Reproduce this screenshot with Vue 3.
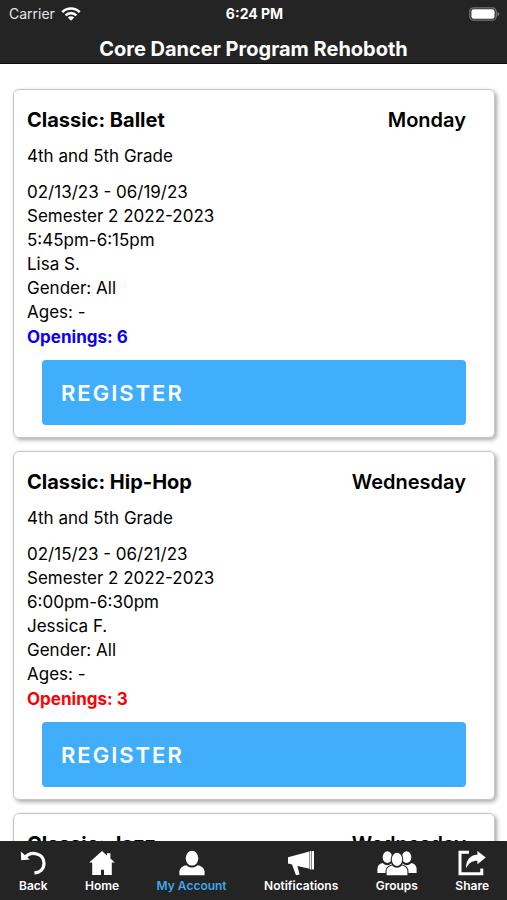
<script setup>
const classes = [
  { name: 'Classic: Ballet', day: 'Monday', grade: '4th and 5th Grade', dates: '02/13/23 - 06/19/23', term: 'Semester 2 2022-2023', time: '5:45pm-6:15pm', teacher: 'Lisa S.', gender: 'All', ages: '-', openings: 6 },
  { name: 'Classic: Hip-Hop', day: 'Wednesday', grade: '4th and 5th Grade', dates: '02/15/23 - 06/21/23', term: 'Semester 2 2022-2023', time: '6:00pm-6:30pm', teacher: 'Jessica F.', gender: 'All', ages: '-', openings: 3 },
  { name: 'Classic: Jazz', day: 'Wednesday' },
]
</script>

<template>
  <div class="screen">
    <header class="top">
      <div class="status">
        <span class="carrier">
          Carrier
          <svg width="20" height="14" viewBox="0 0 20 14" fill="none" stroke="#fff" stroke-width="2.6">
            <path d="M1.3 5.2C6.2 0.3 13.8 0.3 18.7 5.2" />
            <path d="M4.6 8.4C7.7 5.4 12.3 5.4 15.4 8.4" />
            <path d="M10 13.8L6.8 10.6C8.6 8.9 11.4 8.9 13.2 10.6Z" fill="#fff" stroke="none" />
          </svg>
        </span>
        <span class="clock">6:24 PM</span>
        <span class="power">
          <svg width="31" height="14" viewBox="0 0 31 14">
            <rect x="0.8" y="0.8" width="26.4" height="12.4" rx="3.8" fill="none" stroke="#777" stroke-width="1.2" />
            <rect x="2.4" y="2.2" width="23.2" height="9.6" rx="2.2" fill="#fff" />
            <path d="M28.4 4.8Q30.4 5.5 30.4 7T28.4 9.2Z" fill="#777" />
          </svg>
        </span>
      </div>
      <h1>Core Dancer Program Rehoboth</h1>
    </header>

    <main class="list">
      <article v-for="c in classes" :key="c.name" class="card">
        <div class="heading">
          <h2>{{ c.name }}</h2>
          <span>{{ c.day }}</span>
        </div>
        <template v-if="c.grade">
          <p class="grade">{{ c.grade }}</p>
          <p>{{ c.dates }}</p>
          <p>{{ c.term }}</p>
          <p>{{ c.time }}</p>
          <p>{{ c.teacher }}</p>
          <p>Gender: {{ c.gender }}</p>
          <p>Ages: {{ c.ages }}</p>
          <p class="openings" :class="{ few: c.openings < 5 }">Openings: {{ c.openings }}</p>
          <button type="button" class="register">REGISTER</button>
        </template>
      </article>
    </main>

    <nav class="tabs">
      <a href="#back">
        <svg width="26" height="26" viewBox="0 0 26 26">
          <path d="M5.2 7.4C11 0.5 24 3.2 24 13.2C24 19.3 19.5 22.9 14.4 22.9" fill="none" stroke="#fff" stroke-width="3.2" />
          <path d="M0.8 1.6L1.2 10.2L9.8 9.6Z" fill="#fff" />
        </svg>
        Back
      </a>
      <a href="#home">
        <svg width="26" height="26" viewBox="0 0 26 26" fill="#fff">
          <path d="M13 1L18 5.5V3.2H21.4V8.6L25.8 12.6H22.8V25H15V19.8H12V25H3.2V12.6H0.2Z" />
        </svg>
        Home
      </a>
      <a href="#account" class="active" aria-current="page">
        <svg width="26" height="26" viewBox="0 0 26 26" fill="#fff">
          <ellipse cx="13" cy="8.2" rx="6.3" ry="7.4" />
          <path d="M0.4 25.2V22C0.4 18.2 3.5 16 7.4 15.2C10.6 18.4 15.4 18.4 18.6 15.2C22.5 16 25.6 18.2 25.6 22V25.2Z" />
        </svg>
        My Account
      </a>
      <a href="#notifications">
        <svg width="28" height="26" viewBox="0 0 28 26" fill="#fff">
          <path d="M1 7.2L22.4 1.6V18.8L10.4 16L12.6 24.4L9 25.2L5 14.6L1 13.6Z" />
          <path d="M22.8 1H27V19.4H22.8Z" />
          <path d="M24.4 1V19.4" stroke="#555" stroke-width="0.8" />
        </svg>
        Notifications
      </a>
      <a href="#groups">
        <svg width="40" height="26" viewBox="0 0 40 26" fill="#fff">
          <ellipse cx="10.4" cy="7.2" rx="4.7" ry="5.9" />
          <ellipse cx="29.6" cy="7.2" rx="4.7" ry="5.9" />
          <path d="M0.4 23V18.8C0.4 15.7 2.4 13.8 5.6 13C9 16.2 12 15.5 14.5 13.2L17 23Z" />
          <path d="M39.6 23V18.8C39.6 15.7 37.6 13.8 34.4 13C31 16.2 28 15.5 25.5 13.2L23 23Z" />
          <g stroke="#242424" stroke-width="2.2" paint-order="stroke">
            <path d="M9.6 25.2V21.4C9.6 18 12 16.4 15.2 15.6C18 18.5 22 18.5 24.8 15.6C28 16.4 30.4 18 30.4 21.4V25.2Z" />
            <ellipse cx="20" cy="9.4" rx="5.2" ry="6.6" />
          </g>
        </svg>
        Groups
      </a>
      <a href="#share">
        <svg width="28" height="26" viewBox="0 0 28 26">
          <path d="M11 2.2H2V23.8H23.8V18.4" fill="none" stroke="#fff" stroke-width="3" />
          <path d="M19.4 1L27.8 7.6L19.4 14.2V10.8C14.4 10.6 11 13 8 18.2C8 10.2 12 5 19.4 4.8Z" fill="#fff" />
        </svg>
        Share
      </a>
    </nav>
  </div>
</template>

<style>
body {
  background: #fff;
}
</style>

<style scoped>
.screen {
  display: flex;
  flex-direction: column;
  height: 100vh;
  overflow: hidden;
  font-family: Inter, "Liberation Sans", sans-serif;
  color: #000;
}

.top {
  flex: none;
  box-sizing: border-box;
  background: #242424;
  border-bottom: 1px solid #0c0c0c;
  color: #fff;
}

.status {
  display: grid;
  grid-template-columns: 1fr auto 1fr;
  align-items: center;
  height: 27px;
  padding: 0 7px 0 9px;
  font-size: 14px;
}

.carrier {
  display: flex;
  align-items: center;
  gap: 6px;
  color: #e4e4e4;
}

.clock {
  font-weight: 700;
}

.power {
  display: flex;
  justify-content: flex-end;
}

h1 {
  margin: 0;
  padding: 10px 0 2px;
  font-size: 20px;
  font-weight: 700;
  line-height: 24px;
  text-align: center;
}

.list {
  flex: 1;
  min-height: 0;
  overflow: hidden;
  padding: 25px 12px 0 13px;
}

.card {
  box-sizing: border-box;
  min-height: 349px;
  margin-bottom: 13px;
  padding: 18px 28px 12px 13px;
  border: 1px solid #c6c6c6;
  border-radius: 6px;
  box-shadow: 2px 2px 4px rgba(0, 0, 0, 0.35);
}

.heading {
  display: flex;
  justify-content: space-between;
  margin-bottom: 12px;
  font-size: 20px;
  font-weight: 600;
  line-height: 24px;
}

h2 {
  margin: 0;
  font-size: 20px;
  font-weight: 700;
}

p {
  margin: 0;
  font-size: 17px;
  line-height: 24px;
}

.grade {
  margin-bottom: 12px;
}

.openings {
  margin-top: 1px;
  font-weight: 700;
  color: #0c00f0;
}

.openings.few {
  color: #fb0007;
}

.register {
  display: block;
  width: calc(100% - 15px);
  height: 65px;
  margin: 11px 0 0 15px;
  padding: 0 19px;
  border: 0;
  border-radius: 4px;
  background: #41aefc;
  color: #fff;
  font-family: inherit;
  font-size: 22px;
  font-weight: 600;
  letter-spacing: 2px;
  text-align: left;
}

.tabs {
  flex: none;
  display: flex;
  justify-content: space-between;
  box-sizing: border-box;
  height: 59px;
  padding: 9px 18px 0 19px;
  background: #242424;
}

.tabs a {
  display: flex;
  flex-direction: column;
  align-items: center;
  gap: 2px;
  color: #fff;
  font-size: 12px;
  font-weight: 600;
  line-height: 16px;
  text-decoration: none;
}

.tabs a.active {
  color: #41a5ea;
}
</style>
